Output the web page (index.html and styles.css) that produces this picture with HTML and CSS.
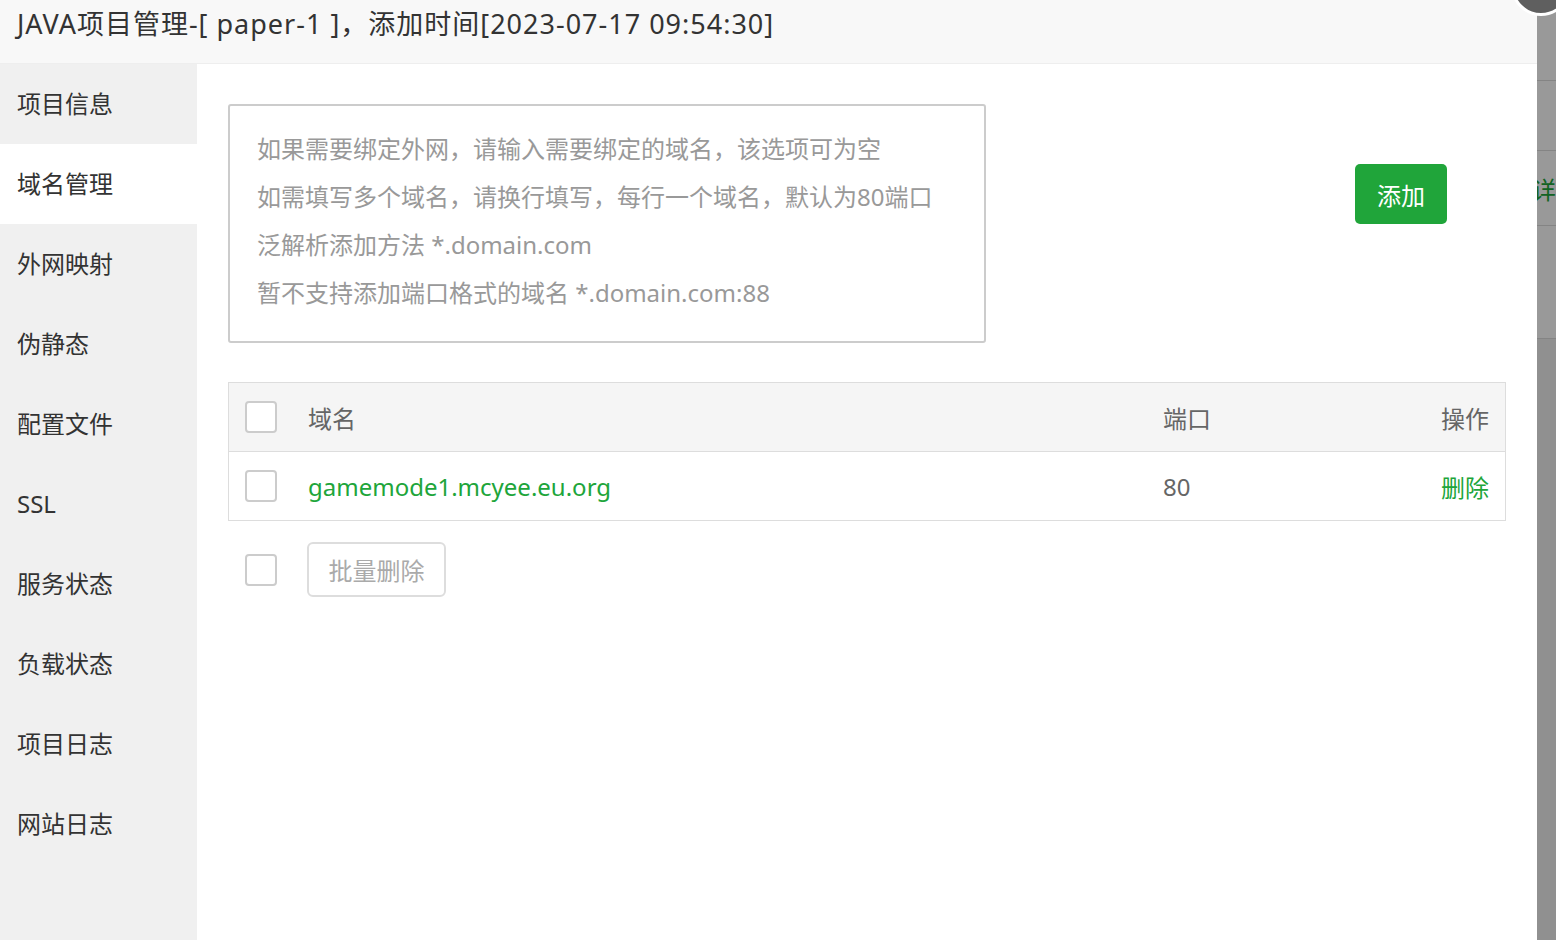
FILE: index.html
```html
<!DOCTYPE html>
<html lang="zh-CN">
<head>
<meta charset="utf-8">
<title>JAVA项目管理</title>
<link rel="stylesheet" href="styles.css">
</head>
<body>
<div class="bg-page">
  <div class="bg-row r1"></div>
  <div class="bg-row r2"></div>
  <div class="bg-row r3"><span class="bg-link">详情</span></div>
  <div class="bg-row r4"></div>
</div>
<div class="mask"></div>

<div class="layer">
  <div class="layer-title">JAVA项目管理-[ paper-1 ]，添加时间[2023-07-17 09:54:30]</div>
  <div class="layer-body">
    <ul class="side-menu">
      <li>项目信息</li>
      <li class="active">域名管理</li>
      <li>外网映射</li>
      <li>伪静态</li>
      <li>配置文件</li>
      <li>SSL</li>
      <li>服务状态</li>
      <li>负载状态</li>
      <li>项目日志</li>
      <li>网站日志</li>
    </ul>
    <div class="main">
      <div class="add-row">
        <textarea class="domain-input" placeholder="如果需要绑定外网，请输入需要绑定的域名，该选项可为空&#10;如需填写多个域名，请换行填写，每行一个域名，默认为80端口&#10;泛解析添加方法 *.domain.com&#10;暂不支持添加端口格式的域名 *.domain.com:88"></textarea>
        <button class="btn-add">添加</button>
      </div>
      <div class="table">
        <div class="tr thead">
          <span class="cb"></span>
          <span class="col-name">域名</span>
          <span class="col-port">端口</span>
          <span class="col-op">操作</span>
        </div>
        <div class="tr">
          <span class="cb"></span>
          <span class="col-name link">gamemode1.mcyee.eu.org</span>
          <span class="col-port">80</span>
          <span class="col-op link">删除</span>
        </div>
      </div>
      <div class="batch-row">
        <span class="cb"></span>
        <button class="btn-batch">批量删除</button>
      </div>
    </div>
  </div>
</div>
<span class="layer-close"></span>
</body>
</html>
```
FILE: styles.css
```css
* { box-sizing: border-box; }
html, body { margin: 0; padding: 0; height: 100%; overflow: hidden; }
body {
  font-family: "Noto Sans", "Noto Sans CJK SC", sans-serif;
  background: #f0f0f0;
  position: relative;
  width: 1556px;
  height: 940px;
}

/* page underneath the dialog */
.bg-page { display: flex; flex-direction: column; background: #f0f0f0; }
.bg-row { background: #fff; border-bottom: 1px solid #ddd; display: flex; align-items: center; justify-content: flex-start; padding-left: 1532px; }
.r1 { height: 81px; background: #fff; }
.r2 { height: 70px; }
.r3 { height: 75px; }
.r4 { height: 113px; }
.bg-link { color: #20a53a; font-size: 24px; white-space: nowrap; line-height: 1; font-family: "Noto Sans CJK SC", sans-serif; margin-top: 2px; }

.mask { position: absolute; inset: 0; background: rgba(0,0,0,0.4); }

/* dialog */
.layer {
  position: absolute;
  left: 0; top: 0;
  width: 1537px;
  height: 940px;
  background: #fff;
  display: flex;
  flex-direction: column;
}
.layer-title {
  height: 64px;
  flex: none;
  background: #f8f8f8;
  border-bottom: 1px solid #eee;
  color: #333;
  font-size: 27px;
  letter-spacing: 1px;
  line-height: 48px;
  padding-left: 17px;
  white-space: nowrap;
}
.layer-body { flex: 1; display: flex; min-height: 0; }

.side-menu {
  list-style: none;
  margin: 0; padding: 0;
  width: 197px;
  flex: none;
  background: #f0f0f0;
}
.side-menu li {
  height: 80px;
  line-height: 80px;
  padding-left: 17px;
  font-size: 24px;
  color: #333;
}
.side-menu li.active { background: #fff; }

.main { flex: 1; padding: 40px 31px 0 31px; }

.add-row { display: flex; align-items: flex-start; }
.domain-input {
  width: 758px;
  height: 239px;
  border: 2px solid #ccc;
  border-radius: 3px;
  padding: 19px 27px;
  font-family: "Noto Sans", "Noto Sans CJK SC", sans-serif;
  font-size: 24px;
  line-height: 48px;
  resize: none;
  outline: none;
  color: #333;
}
.domain-input::placeholder { color: #999; opacity: 1; }
.btn-add {
  margin: 60px 59px 0 auto;
  width: 92px;
  height: 60px;
  border: none;
  border-radius: 5px;
  background: #20a53a;
  color: #fff;
  font-family: "Noto Sans CJK SC", sans-serif;
  font-size: 24px;
  padding: 0;
}

.table { margin-top: 39px; border: 1px solid #ddd; }
.tr { display: flex; align-items: center; height: 69px; padding: 0 16px; font-size: 24px; color: #666; }
.tr + .tr { border-top: 1px solid #ddd; }
.thead { height: 68px; background: #f5f5f5; }
.cb {
  width: 32px; height: 32px;
  border: 2px solid #ccc;
  border-radius: 4px;
  background: #fff;
  flex: none;
}
.col-name { margin-left: 31px; flex: 1; }
.col-port { width: 199px; }
.col-op { width: 127px; text-align: right; }
.link { color: #20a53a; }

.batch-row { display: flex; align-items: center; margin-top: 21px; padding-left: 17px; }
.btn-batch {
  margin-left: 30px;
  width: 139px;
  height: 55px;
  border: 2px solid #ddd;
  border-radius: 6px;
  background: #fff;
  color: #aaa;
  font-family: "Noto Sans CJK SC", sans-serif;
  font-size: 24px;
  padding: 0;
}

.layer-close {
  position: absolute;
  left: 1511px;
  top: -44px;
  width: 60px;
  height: 60px;
  border-radius: 50%;
  background: #5f5f5f;
  border: 3px solid #fff;
}
```
